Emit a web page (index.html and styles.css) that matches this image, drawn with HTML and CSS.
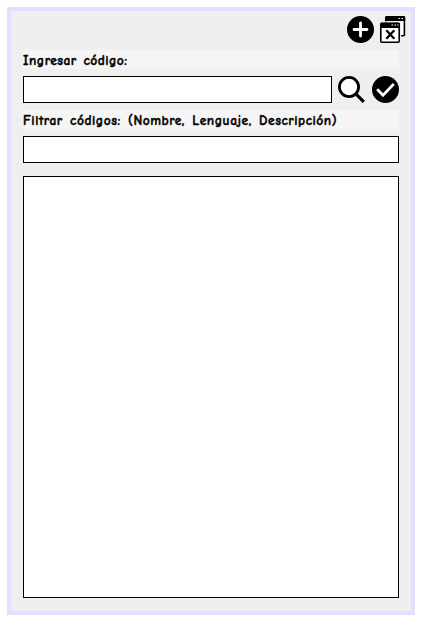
FILE: index.html
```html
<!DOCTYPE html>
<html lang="es">
<head>
<meta charset="utf-8">
<title>Códigos</title>
<link rel="stylesheet" href="styles.css">
</head>
<body>
<main class="window">
  <div class="toolbar">
    <svg class="icon" viewBox="0 0 27 27"><circle cx="13.5" cy="13.5" r="13.5"/><path class="mark" d="M13.5 7v13M7 13.5h13" stroke-width="2.8" stroke-linecap="round"/></svg>
    <svg class="icon" viewBox="0 0 27 27">
      <rect class="pane" x="6" y=".8" width="18.400" height="19" rx="1"/>
      <path d="M5 6V1.500Q5 0 6.500 0h17.200Q25.200 0 25.200 1.500V5H5z"/>
      <path class="mark" d="M18.500 2.500h1.500M21.500 2.500h1.500" stroke-width="1.2"/>
      <rect class="gap" x="-1" y="5.300" width="22" height="22"/>
      <rect class="pane" x=".8" y="7.500" width="18.400" height="18.700" rx="1"/>
      <path d="M0 12V8Q0 6.500 1.500 6.500h17Q20 6.500 20 8V12z"/>
      <path class="mark" d="M11.500 9h1.500M14.500 9h1.500M17.200 9h1.300" stroke-width="1.2"/>
      <path class="cross" d="M6.300 14.300l8 8.500M14.300 14.300l-8 8.500"/>
    </svg>
  </div>
  <label class="caption" for="code">Ingresar código:</label>
  <div class="row">
    <input class="field" id="code" type="text">
    <svg class="icon" viewBox="0 0 27 27"><circle class="lens" cx="11" cy="11" r="9.600"/><path class="handle" d="M17.800 17.800l8 8"/></svg>
    <svg class="icon check" viewBox="0 0 27 27"><circle cx="13.500" cy="13.500" r="13.500"/><path class="mark" d="M5.200 13.300l5.800 5.900L21.800 8" stroke-width="2.700"/></svg>
  </div>
  <label class="caption filter" for="filter">Filtrar códigos: (Nombre, Lenguaje, Descripción)</label>
  <input class="field" id="filter" type="text">
  <section class="list"></section>
</main>
</body>
</html>
```
FILE: styles.css
```css
* { box-sizing: border-box; }
body { margin: 0; padding: 7px; background: #fff; }
.window {
  display: flex;
  flex-direction: column;
  width: 408px;
  height: 608px;
  padding: 5px 12px 13px;
  border: 4px solid #e0e0ff;
  background: #efefef;
}
.toolbar {
  display: flex;
  gap: 6px;
  margin: 0 -8px 7px 324px;
}
.icon { display: block; flex: none; width: 27px; height: 27px; }
.mark { fill: none; stroke: #fff; }
.pane { fill: #fff; stroke: #000; stroke-width: 1.6; }
.gap { fill: #efefef; }
.cross { fill: none; stroke: #000; stroke-width: 2.2; }
.lens { fill: #fff; stroke: #000; stroke-width: 2.8; }
.handle { fill: none; stroke: #000; stroke-width: 3.2; }
.caption {
  height: 19px;
  margin-bottom: 7px;
  background: #f5f5f5;
  color: #000;
  font: bold 13.5px/21px "Comic Sans MS", "Comic Neue", Lato, sans-serif;
  letter-spacing: .48px;
  word-spacing: 1.4px;
  white-space: nowrap;
  -webkit-text-stroke: .4px #000;
}
.filter { letter-spacing: .53px; word-spacing: 1.9px; }
.row { display: grid; grid-template-columns: 309px 27px 27px; column-gap: 6px; margin-bottom: 7px; }
.check { margin-left: 1px; }
.field {
  width: 100%;
  height: 27px;
  margin: 0;
  padding: 2px 4px;
  border: 1px solid #000;
  border-radius: 0;
  outline: 0;
  background: #fff;
}
.list { flex: 1; margin-top: 13px; border: 1px solid #000; background: #fff; }
```
